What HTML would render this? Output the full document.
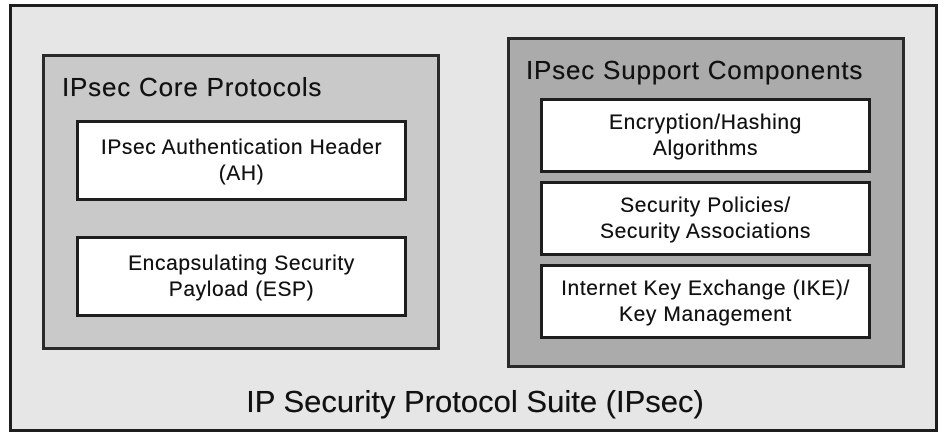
<!DOCTYPE html>
<html><head><style>
body{margin:0;width:950px;height:441px;background:#fff;position:relative;overflow:hidden;font-family:"Liberation Sans",sans-serif;color:#111}
.a{position:absolute;box-sizing:border-box}
.outer{left:9px;top:4px;width:929px;height:428px;border:3px solid #1e1e1e;background:#e6e6e6}
.left{left:42px;top:54px;width:398px;height:296px;border:3px solid #2a2a2a;background:#c9c9c9}
.right{left:507px;top:37px;width:398px;height:331px;border:3px solid #2a2a2a;background:#ababab}
.w{background:#fff;border:3px solid #1e1e1e;display:flex;align-items:center;justify-content:center;text-align:center;font-size:21px;letter-spacing:0.6px;line-height:26px;white-space:nowrap;text-shadow:0 0 0.4px #111}
.t{position:absolute;font-size:26px;letter-spacing:0.8px;white-space:nowrap;text-shadow:0 0 0.4px #111}
</style></head><body>
<div class="a outer"></div>
<div class="a left"></div>
<div class="t" style="left:62px;top:72px">IPsec Core Protocols</div>
<div class="a w" style="left:76px;top:120px;width:331px;height:81px">IPsec Authentication Header<br>(AH)</div>
<div class="a w" style="left:76px;top:236px;width:331px;height:81px">Encapsulating Security<br>Payload (ESP)</div>
<div class="a right"></div>
<div class="t" style="left:526px;top:55px">IPsec Support Components</div>
<div class="a w" style="left:540px;top:98px;width:331px;height:75px">Encryption/Hashing<br>Algorithms</div>
<div class="a w" style="left:540px;top:181px;width:331px;height:75px">Security Policies/<br>Security Associations</div>
<div class="a w" style="left:540px;top:264px;width:331px;height:75px">Internet Key Exchange (IKE)/<br>Key Management</div>
<div class="t" style="left:0;width:950px;text-align:center;top:384px;font-size:31px;letter-spacing:0px">IP Security Protocol Suite (IPsec)</div>
</body></html>
